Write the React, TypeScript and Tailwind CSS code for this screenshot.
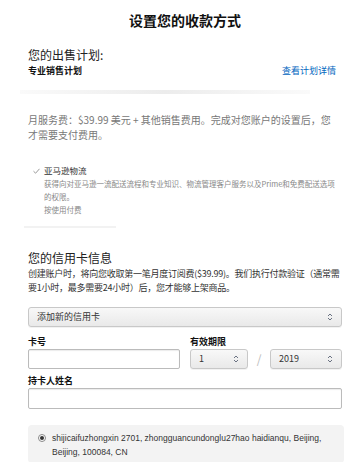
const font = { fontFamily: '"Noto Sans CJK SC", "Noto Sans", sans-serif' };

const Chevrons = () => (
  <svg width="6" height="8" viewBox="0 0 6 8" className="text-gray-500">
    <path d="M1 3 L3 1 L5 3" fill="none" stroke="currentColor" strokeWidth="1" />
    <path d="M1 5 L3 7 L5 5" fill="none" stroke="currentColor" strokeWidth="1" />
  </svg>
);

const SelectBox = ({ label, className }: { label: string; className: string }) => (
  <div
    className={`flex items-center justify-between h-[20px] px-2 rounded-[3px] border border-[#c8c8c8] bg-gradient-to-b from-[#f8f8f8] to-[#e9e9e9] shadow-[0_1px_0_rgba(0,0,0,0.05)] ${className}`}
  >
    <span className="text-[9px] text-[#333]">{label}</span>
    <Chevrons />
  </div>
);

const App = () => {
  return (
    <div className="w-[364px] h-[462px] bg-white overflow-hidden" style={font}>
      <div className="pl-[28px] pr-[22px]">
        <h1 className="pt-[11px] text-center text-[14px] leading-[18px] font-bold text-[#111]">
          设置您的收款方式
        </h1>

        <div className="mt-[18px] text-[12px] leading-[16px] text-[#222]">您的出售计划:</div>
        <div className="flex items-center justify-between pr-[6px] mt-[1px]">
          <span className="text-[9px] leading-[13px] font-bold text-[#111]">专业销售计划</span>
          <a className="text-[9px] leading-[13px] text-[#0066c0]">查看计划详情</a>
        </div>

        <div className="mt-[13px] -ml-[8px] mr-[32px] h-[4px] bg-gradient-to-r from-[#fafafa] via-[#ececec] to-[#fafafa]" />

        <p className="mt-[18px] max-w-[310px] text-[10px] leading-[15px] text-[#777]">
          月服务费：$39.99 美元 + 其他销售费用。完成对您账户的设置后，您才需要支付费用。
        </p>

        <div className="mt-[22px] pl-[5px]">
          <div className="flex items-center gap-[4px]">
            <svg width="7" height="6" viewBox="0 0 7 6">
              <path d="M0.5 3.2 L2.6 5.2 L6.5 0.8" fill="none" stroke="#999" strokeWidth="1" />
            </svg>
            <span className="text-[8.5px] leading-[13px] text-[#333]">亚马逊物流</span>
          </div>
          <div className="pl-[11px] pr-[6px] text-[7.5px] leading-[13px] text-[#888]">
            <p>获得向对亚马逊一流配送流程和专业知识、物流管理客户服务以及Prime和免费配送选项的权限。</p>
            <p>按使用付费</p>
          </div>
        </div>

        <div className="mt-[10px] ml-[-4px] w-[92px] h-[2px] bg-[#f2f2f2]" />

        <div className="mt-[22px] text-[12px] leading-[16px] text-[#222]">您的信用卡信息</div>
        <p className="mt-[1px] text-[9px] tracking-[-0.25px] leading-[14px] text-[#333]">
          创建账户时，将向您收取第一笔月度订阅费($39.99)。我们执行付款验证（通常需要1小时，最多需要24小时）后，您才能够上架商品。
        </p>

        <SelectBox label="添加新的信用卡" className="mt-[12px] w-full" />

        <div className="mt-[8px] flex">
          <div className="w-[152px]">
            <div className="text-[9px] leading-[13px] font-bold text-[#111]">卡号</div>
            <div className="mt-[1px] h-[20px] border border-[#bbb] rounded-[2px] shadow-[inset_0_1px_1px_rgba(0,0,0,0.08)]" />
          </div>
          <div className="ml-[10px] flex-1">
            <div className="text-[9px] leading-[13px] font-bold text-[#111]">有效期限</div>
            <div className="mt-[1px] flex items-center">
              <SelectBox label="1" className="w-[58px]" />
              <span className="flex-1 text-center text-[12px] text-[#bbb]">/</span>
              <SelectBox label="2019" className="w-[72px]" />
            </div>
          </div>
        </div>

        <div className="mt-[5px] text-[9px] leading-[13px] font-bold text-[#111]">持卡人姓名</div>
        <div className="mt-[1px] h-[21px] border border-[#bbb] rounded-[2px] shadow-[inset_0_1px_1px_rgba(0,0,0,0.08)]" />

        <div className="mt-[16px] mr-[-2px] flex items-start gap-[6px] bg-[#f3f3f3] rounded-[4px] pl-[10px] pr-[8px] pt-[6px] pb-[4px]">
          <span className="mt-[3px] w-[8px] h-[8px] rounded-full border border-[#888] bg-white flex items-center justify-center shrink-0">
            <span className="w-[4px] h-[4px] rounded-full bg-[#333]" />
          </span>
          <span className="text-[8.5px] leading-[14px] text-[#333]" style={{ fontFamily: '"Liberation Sans", Arial, sans-serif' }}>
            shijicaifuzhongxin 2701, zhongguancundonglu27hao haidianqu, Beijing, Beijing, 100084, CN
          </span>
        </div>
      </div>
    </div>
  );
};

export default App;
